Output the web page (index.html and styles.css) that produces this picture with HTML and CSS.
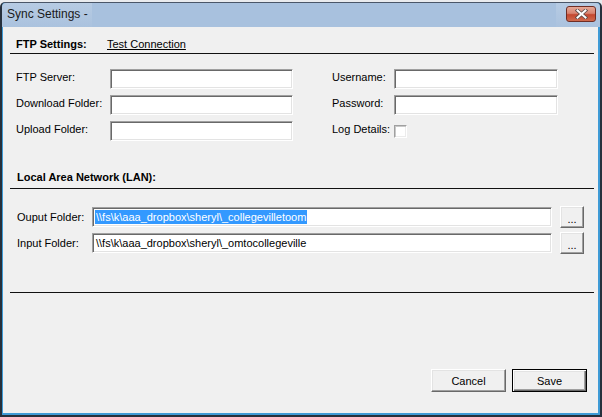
FILE: index.html
```html
<!DOCTYPE html>
<html>
<head>
<meta charset="utf-8">
<title>Sync Settings</title>
<link rel="stylesheet" href="styles.css">
</head>
<body>
<div class="window">
  <div class="titlebar">
    <span class="title">Sync Settings -</span>
    <span class="title-blur"></span>
    <button class="close" aria-label="Close">
      <svg width="13" height="10" viewBox="0 0 13 10">
        <path d="M2.5 1.5 L10.5 8.5 M10.5 1.5 L2.5 8.5" stroke="#5a4a48" stroke-width="3.6" stroke-linecap="square" fill="none"/>
        <path d="M2.5 1.5 L10.5 8.5 M10.5 1.5 L2.5 8.5" stroke="#ffffff" stroke-width="2" stroke-linecap="square" fill="none"/>
      </svg>
    </button>
  </div>
  <div class="client">
    <div class="section-head ftp-head">
      <span class="head-label">FTP Settings:</span>
      <span class="link">Test Connection</span>
    </div>
    <div class="rule"></div>

    <div class="ftp-grid">
      <span class="lbl">FTP Server:</span>
      <div class="textbox"></div>
      <span></span>
      <span class="lbl">Username:</span>
      <div class="textbox"></div>

      <span class="lbl">Download Folder:</span>
      <div class="textbox"></div>
      <span></span>
      <span class="lbl">Password:</span>
      <div class="textbox"></div>

      <span class="lbl">Upload Folder:</span>
      <div class="textbox"></div>
      <span></span>
      <span class="lbl">Log Details:</span>
      <div class="check-cell"><div class="checkbox"></div></div>
    </div>

    <div class="section-head lan-head">
      <span class="head-label">Local Area Network (LAN):</span>
    </div>
    <div class="rule"></div>

    <div class="folder-grid">
      <span class="lbl2">Ouput Folder:</span>
      <div class="textbox text-filled"><span class="selected">\\fs\k\aaa_dropbox\sheryl\_collegevilletoom</span></div>
      <button class="btn browse">...</button>

      <span class="lbl2">Input Folder:</span>
      <div class="textbox text-filled"><span class="plain">\\fs\k\aaa_dropbox\sheryl\_omtocollegeville</span></div>
      <button class="btn browse">...</button>
    </div>

    <div class="rule rule-bottom"></div>

    <div class="footer">
      <button class="btn action">Cancel</button>
      <button class="btn action default">Save</button>
    </div>
  </div>
</div>
</body>
</html>
```

FILE: styles.css
```css
html, body {
  margin: 0;
  padding: 0;
  width: 602px;
  height: 417px;
  overflow: hidden;
  background: #e9ebee;
}

body {
  font-family: "Liberation Sans", Arial, sans-serif;
  font-size: 11px;
  color: #000;
}

.window {
  margin-top: 2px;
  height: 415px;
  box-sizing: border-box;
  border-left: 2px solid #26303c;
  border-right: 2px solid #26303c;
  border-bottom: 2px solid #26303c;
  border-top: 1px solid #4a5668;
  border-radius: 5px 5px 0 0;
  background: #3f9bd6;
  display: flex;
  flex-direction: column;
}

.titlebar {
  height: 24px;
  flex: none;
  display: flex;
  align-items: center;
  background: linear-gradient(#b6cbe3, #aac2de);
  border-radius: 4px 4px 0 0;
  padding-left: 5px;
}

.title {
  font-size: 12px;
  color: #1a1a1a;
  line-height: 14px;
  margin-top: -2px;
}

.title-blur {
  flex: 1;
  height: 24px;
  margin-left: 4px;
  margin-right: 10px;
  background: #a8c1de;
}

.close {
  width: 30px;
  height: 16px;
  margin-right: 4px;
  margin-top: -2px;
  padding: 0;
  box-sizing: border-box;
  border: 1px solid #6f2d24;
  border-radius: 3px;
  background: linear-gradient(#e6a896 0%, #d88370 45%, #c4472f 55%, #cf6a4e 100%);
  display: flex;
  align-items: center;
  justify-content: center;
}

.close svg {
  display: block;
}

.client {
  flex: 1;
  margin: 0 2px 2px 1px;
  background: #f0f0f0;
  display: flex;
  flex-direction: column;
}

.section-head {
  display: flex;
  line-height: 13px;
}

.ftp-head {
  padding: 11px 0 2px 13px;
}

.lan-head {
  padding: 30px 0 4px 14px;
}

.head-label {
  font-weight: bold;
}

.ftp-head .head-label {
  width: 91px;
}

.link {
  text-decoration: underline;
}

.rule {
  height: 1px;
  background: #111;
  margin: 0 4px 0 7px;
  flex: none;
}

.ftp-grid {
  display: grid;
  grid-template-columns: 94px 183px 39px 62px 164px;
  grid-auto-rows: 20px;
  row-gap: 6px;
  align-items: center;
  margin-top: 15px;
  padding-left: 13px;
}

.lbl {
  line-height: 13px;
  padding-bottom: 3px;
}

.textbox {
  box-sizing: border-box;
  height: 20px;
  background: #fff;
  border: 1px solid;
  border-color: #a0a0a0 #ffffff #ffffff #a0a0a0;
  box-shadow: inset 1px 1px 0 #696969, inset -1px -1px 0 #e3e3e3;
}

.check-cell {
  display: flex;
  align-items: center;
}

.checkbox {
  box-sizing: border-box;
  width: 13px;
  height: 13px;
  background: #fff;
  border: 1px solid;
  border-color: #a0a0a0 #ffffff #ffffff #a0a0a0;
  box-shadow: inset 1px 1px 0 #c8c8c8, inset -1px -1px 0 #ececec;
}

.folder-grid {
  display: grid;
  grid-template-columns: 75px 460px 32px;
  column-gap: 0;
  grid-auto-rows: 22px;
  row-gap: 4px;
  align-items: center;
  margin-top: 17px;
  padding-left: 14px;
}

.lbl2 {
  line-height: 13px;
}

.text-filled {
  padding: 2px 0 0 2px;
  white-space: nowrap;
  overflow: hidden;
}

.selected,
.plain {
  display: inline-block;
  line-height: 14px;
  padding: 0 1px;
}

.selected {
  background: #3399ff;
  color: #fff;
}

.rule-bottom {
  margin-top: 38px;
}

.btn {
  font-family: "Liberation Sans", Arial, sans-serif;
  font-size: 11px;
  color: #000;
  background: #f0f0f0;
  box-sizing: border-box;
  padding: 0;
  border: 1px solid;
  border-color: #ffffff #696969 #696969 #ffffff;
  box-shadow: inset -1px -1px 0 #a0a0a0, inset 1px 1px 0 #e3e3e3;
  border-radius: 0;
}

.browse {
  width: 24px;
  height: 22px;
  line-height: 14px;
  padding-top: 4px;
  justify-self: end;
}

.footer {
  margin-top: auto;
  display: flex;
  justify-content: flex-end;
  gap: 6px;
  padding: 0 11px 21px 0;
}

.action {
  width: 75px;
  height: 23px;
}

.default {
  border: 1px solid #000;
  box-shadow: inset 1px 1px 0 #ffffff, inset -1px -1px 0 #696969, inset -2px -2px 0 #a0a0a0, inset 2px 2px 0 #e3e3e3;
}
```
